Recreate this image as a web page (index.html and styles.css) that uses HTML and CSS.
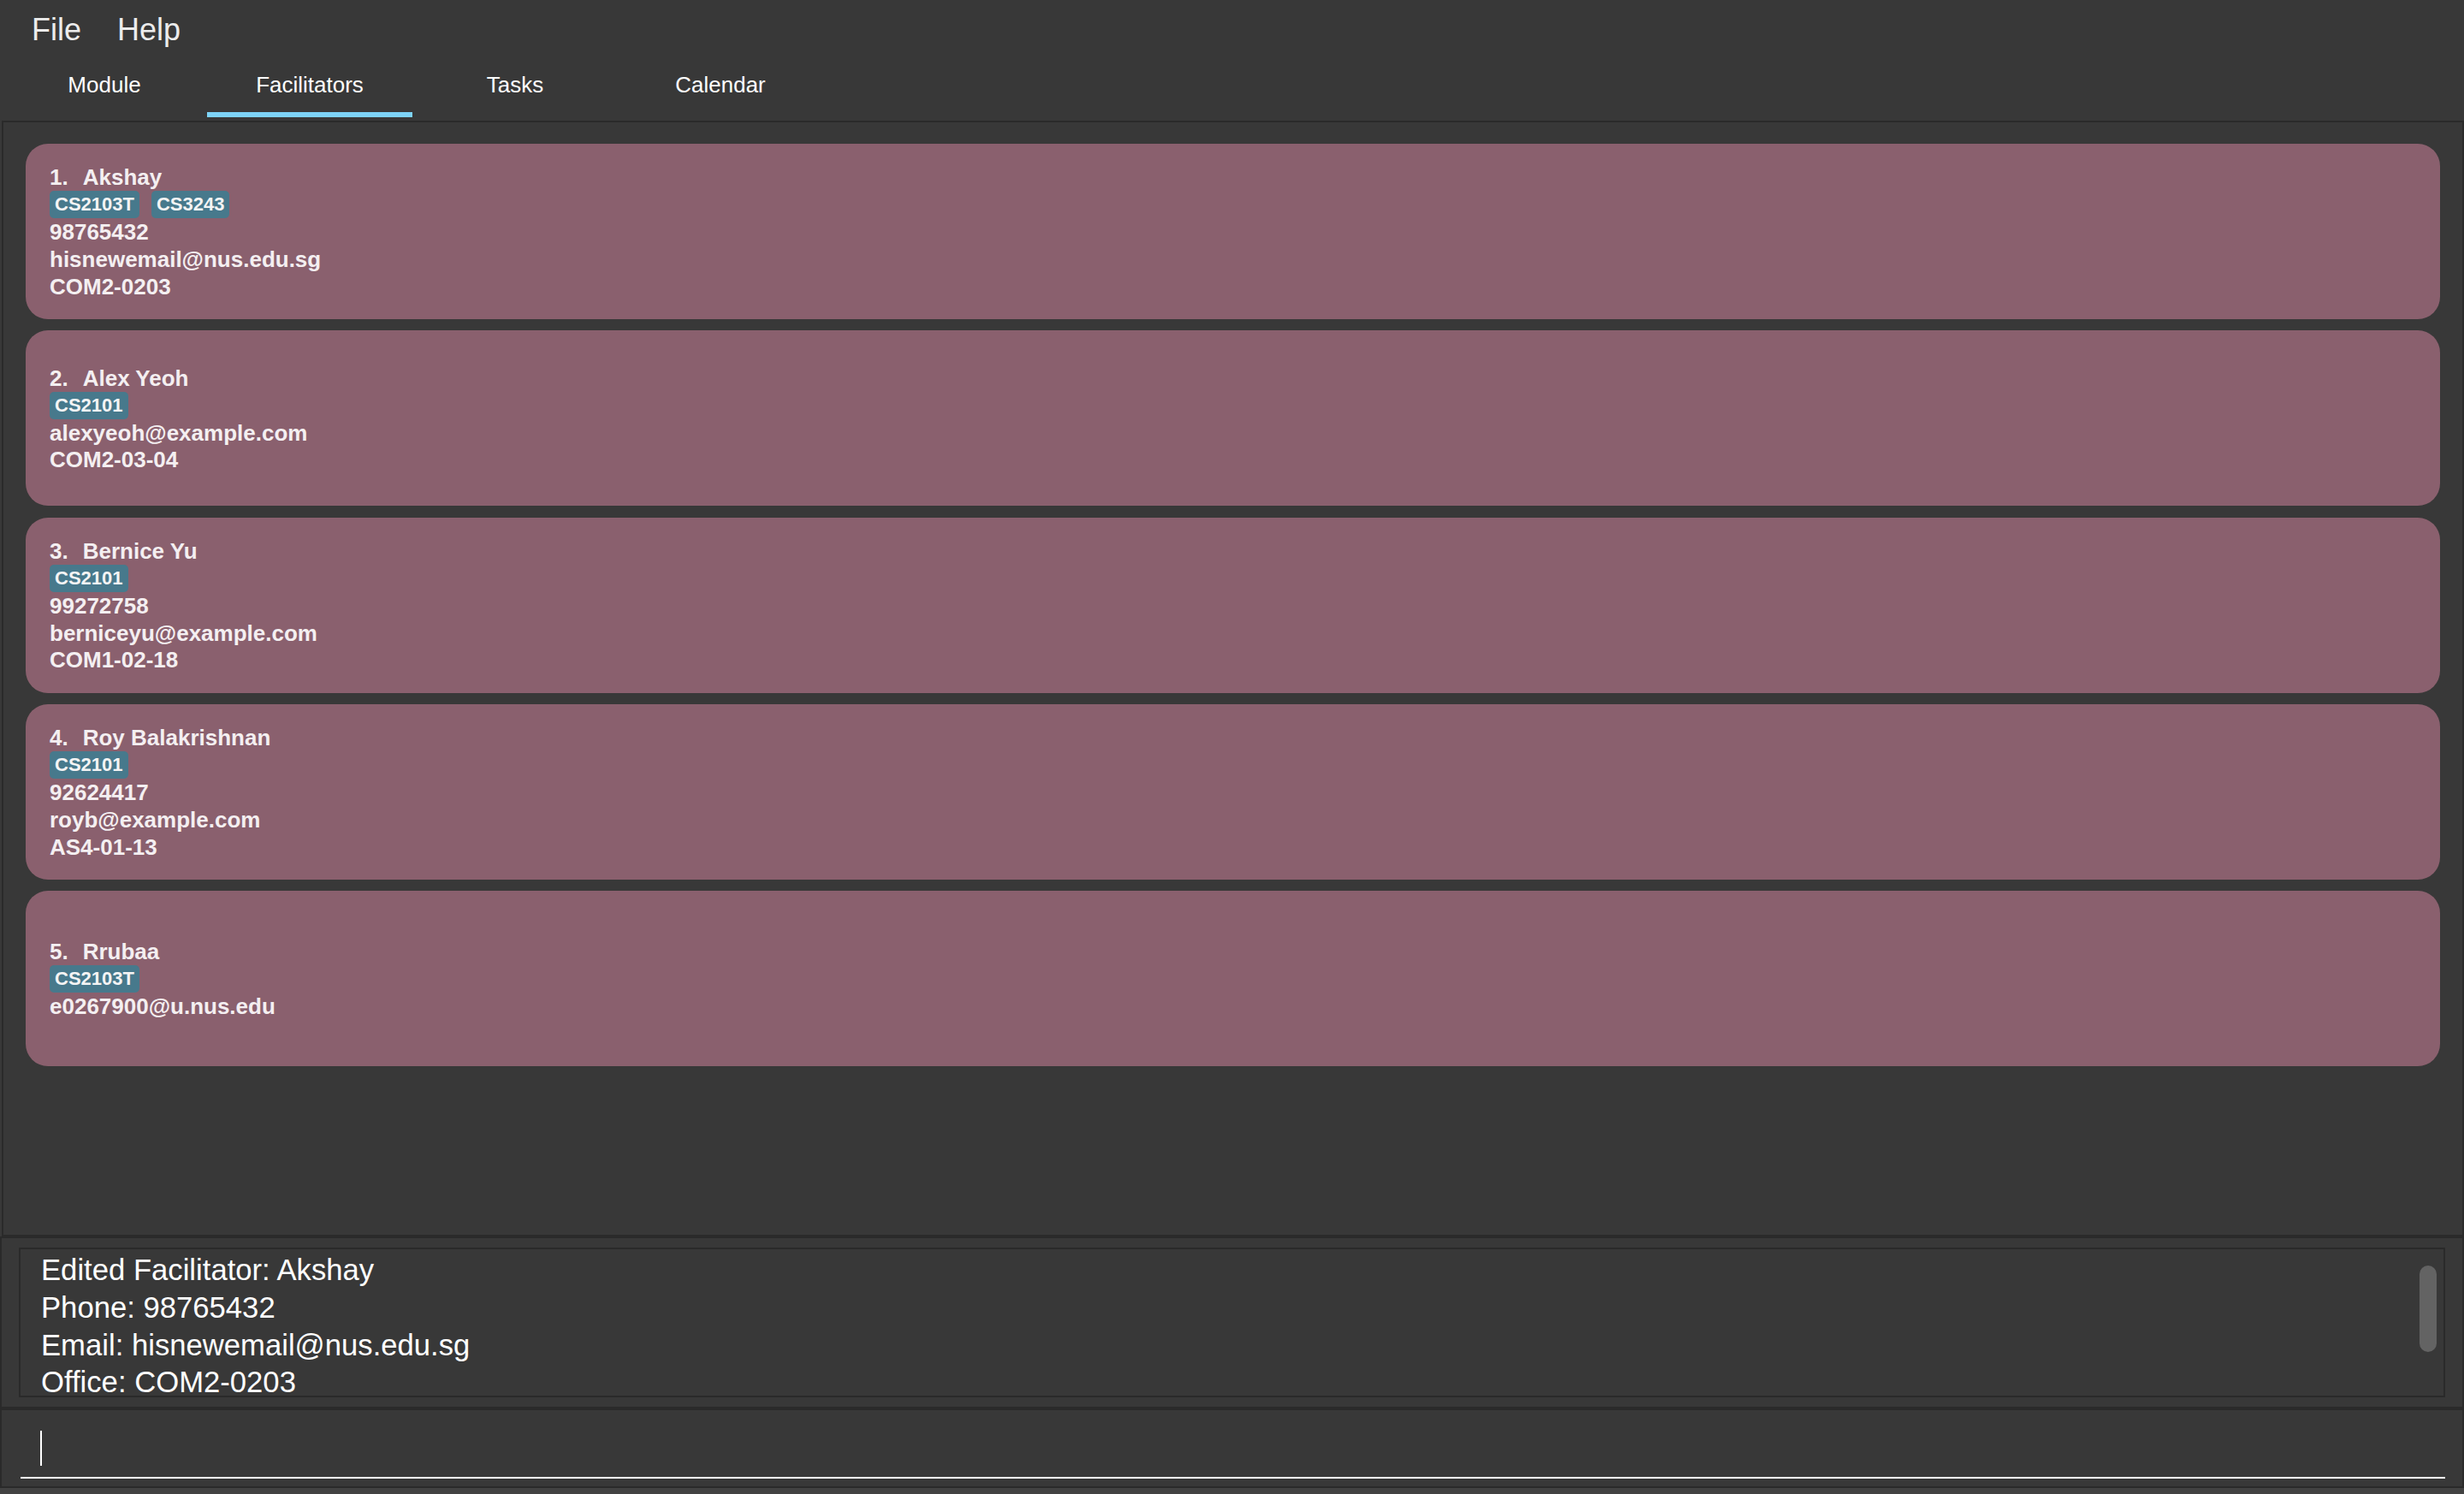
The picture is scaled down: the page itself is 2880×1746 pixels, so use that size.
FILE: index.html
```html
<!DOCTYPE html>
<html lang="en">
<head>
<meta charset="utf-8">
<title>Facilitators</title>
<link rel="stylesheet" href="styles.css">
</head>
<body>
<div class="app">
  <nav class="menubar">
    <span class="menu-item">File</span>
    <span class="menu-item">Help</span>
  </nav>
  <div class="tabs">
    <div class="tab">Module</div>
    <div class="tab active">Facilitators</div>
    <div class="tab">Tasks</div>
    <div class="tab">Calendar</div>
  </div>
  <main class="list-panel">
    <ul class="card-list">
      <li class="card">
        <div class="card-body">
          <div class="name-row"><span class="idx">1.</span><span class="name">Akshay</span></div>
          <div class="tags"><span class="tag">CS2103T</span><span class="tag">CS3243</span></div>
          <div class="line">98765432</div>
          <div class="line">hisnewemail@nus.edu.sg</div>
          <div class="line">COM2-0203</div>
        </div>
      </li>
      <li class="card">
        <div class="card-body">
          <div class="name-row"><span class="idx">2.</span><span class="name">Alex Yeoh</span></div>
          <div class="tags"><span class="tag">CS2101</span></div>
          <div class="line">alexyeoh@example.com</div>
          <div class="line">COM2-03-04</div>
        </div>
      </li>
      <li class="card">
        <div class="card-body">
          <div class="name-row"><span class="idx">3.</span><span class="name">Bernice Yu</span></div>
          <div class="tags"><span class="tag">CS2101</span></div>
          <div class="line">99272758</div>
          <div class="line">berniceyu@example.com</div>
          <div class="line">COM1-02-18</div>
        </div>
      </li>
      <li class="card">
        <div class="card-body">
          <div class="name-row"><span class="idx">4.</span><span class="name">Roy Balakrishnan</span></div>
          <div class="tags"><span class="tag">CS2101</span></div>
          <div class="line">92624417</div>
          <div class="line">royb@example.com</div>
          <div class="line">AS4-01-13</div>
        </div>
      </li>
      <li class="card">
        <div class="card-body">
          <div class="name-row"><span class="idx">5.</span><span class="name">Rrubaa</span></div>
          <div class="tags"><span class="tag">CS2103T</span></div>
          <div class="line">e0267900@u.nus.edu</div>
        </div>
      </li>
    </ul>
  </main>
  <section class="result">
    <div class="result-box">
      <div class="result-text">
        <div>Edited Facilitator: Akshay</div>
        <div>Phone: 98765432</div>
        <div>Email: hisnewemail@nus.edu.sg</div>
        <div class="last">Office: COM2-0203</div>
      </div>
      <div class="scroll-thumb"></div>
    </div>
  </section>
  <section class="command">
    <div class="command-field"><span class="caret"></span></div>
  </section>
  <div class="statusbar"></div>
</div>
</body>
</html>
```

FILE: styles.css
```css
html, body {
  margin: 0;
  padding: 0;
}

body {
  background: #383838;
  font-family: "Liberation Sans", Arial, sans-serif;
  width: 2880px;
  height: 1746px;
  overflow: hidden;
}

.app {
  display: flex;
  flex-direction: column;
  width: 2880px;
  height: 1746px;
}

/* Menu bar */
.menubar {
  display: flex;
  height: 70px;
  padding-left: 16px;
  box-sizing: border-box;
}

.menu-item {
  font-size: 36px;
  line-height: 70px;
  color: #ececec;
  padding: 0 21px;
}

/* Tabs */
.tabs {
  display: flex;
  height: 71px;
  padding-left: 2px;
  box-sizing: border-box;
}

.tab {
  width: 240px;
  height: 67px;
  box-sizing: border-box;
  padding-top: 14px;
  font-size: 26px;
  line-height: 30px;
  color: #ffffff;
  text-align: center;
  border-bottom: 6px solid transparent;
}

.tab.active {
  border-bottom-color: #7dd3f8;
}

/* List panel */
.list-panel {
  height: 1304px;
  box-sizing: border-box;
  margin-left: 2px;
  border: 2px solid #2a2a2a;
  padding: 25px 26px 0 26px;
  overflow: hidden;
}

.card-list {
  list-style: none;
  margin: 0;
  padding: 0;
  display: flex;
  flex-direction: column;
  gap: 13.25px;
}

.card {
  height: 205px;
  background: #8a606e;
  border-radius: 26px;
  display: flex;
  align-items: center;
  padding-left: 28px;
  color: #f4eff1;
  font-weight: bold;
}

.card-body {
  display: flex;
  flex-direction: column;
  padding-top: 2px;
}

.name-row {
  display: flex;
  font-size: 26px;
  line-height: 32px;
}

.idx {
  margin-right: 17px;
}

.tags {
  display: flex;
  gap: 14px;
  height: 32px;
  margin-bottom: 1px;
}

.tag {
  background: #47798c;
  color: #f4f4f4;
  font-size: 22px;
  line-height: 32px;
  padding: 0 6px;
  border-radius: 5px;
}

.line {
  font-size: 26px;
  line-height: 31.75px;
}

/* Result display */
.result {
  height: 201px;
  box-sizing: border-box;
  border: 2px solid #2a2a2a;
  padding: 11px 20px 11px 20px;
}

.result-box {
  position: relative;
  height: 175px;
  box-sizing: border-box;
  border: 2px solid #2a2a2a;
  padding: 2px 0 0 24px;
  overflow: hidden;
}

.result-text {
  font-size: 34.67px;
  line-height: 44px;
  color: #ffffff;
}

.result-text .last {
  line-height: 37px;
  padding-top: 3px;
}

.scroll-thumb {
  position: absolute;
  top: 19px;
  right: 8px;
  width: 20px;
  height: 101px;
  border-radius: 10px;
  background: #636363;
}

/* Command box */
.command {
  height: 93px;
  box-sizing: border-box;
  border: 2px solid #2a2a2a;
  padding: 0 20px 9px 22px;
  display: flex;
  align-items: flex-end;
}

.command-field {
  flex: 1;
  height: 80px;
  box-sizing: border-box;
  border-bottom: 2px solid #ffffff;
  padding: 24px 0 0 23px;
}

.caret {
  display: block;
  width: 2px;
  height: 41px;
  background: #ffffff;
}

.statusbar {
  flex: 1;
  background: #424242;
}
```
